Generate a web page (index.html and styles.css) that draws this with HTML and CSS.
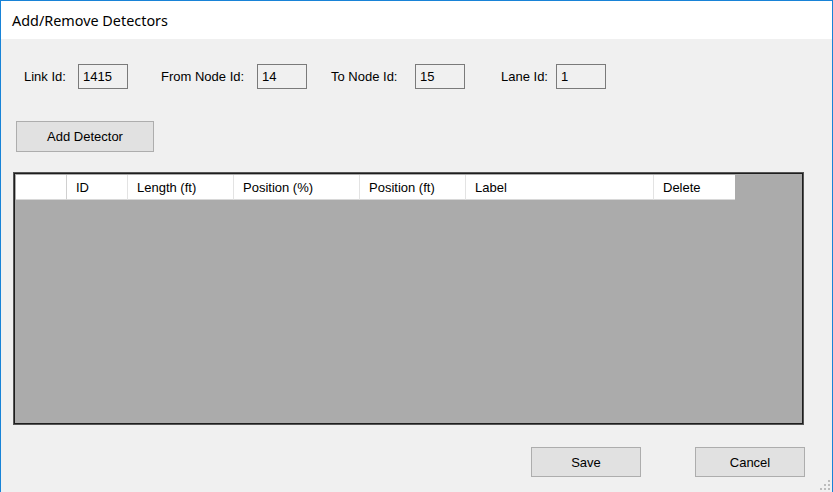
FILE: index.html
```html
<!DOCTYPE html>
<html>
<head>
<meta charset="utf-8">
<link rel="stylesheet" href="styles.css">
</head>
<body>
<div class="window">
  <div class="titlebar">Add/Remove Detectors</div>
  <div class="content">
    <div class="fields">
      <div class="field f-link"><span class="lbl w-link">Link Id:</span><span class="box">1415</span></div>
      <div class="field f-from"><span class="lbl w-from">From Node Id:</span><span class="box">14</span></div>
      <div class="field f-to"><span class="lbl w-to">To Node Id:</span><span class="box">15</span></div>
      <div class="field f-lane"><span class="lbl w-lane">Lane Id:</span><span class="box">1</span></div>
    </div>
    <button class="btn btn-add">Add Detector</button>
    <div class="grid">
      <div class="grid-head">
        <div class="col c-row"></div>
        <div class="col c-id">ID</div>
        <div class="col c-len">Length (ft)</div>
        <div class="col c-pp">Position (%)</div>
        <div class="col c-pf">Position (ft)</div>
        <div class="col c-lab">Label</div>
        <div class="col c-del">Delete</div>
      </div>
    </div>
    <div class="actions">
      <button class="btn btn-save">Save</button>
      <button class="btn btn-cancel">Cancel</button>
    </div>
    <svg class="grip" width="12" height="12" viewBox="0 0 12 12">
      <rect x="9" y="1" width="2" height="2" fill="#bcbcbc"/>
      <rect x="5" y="5" width="2" height="2" fill="#bcbcbc"/>
      <rect x="9" y="5" width="2" height="2" fill="#bcbcbc"/>
      <rect x="1" y="9" width="2" height="2" fill="#bcbcbc"/>
      <rect x="5" y="9" width="2" height="2" fill="#bcbcbc"/>
      <rect x="9" y="9" width="2" height="2" fill="#bcbcbc"/>
    </svg>
  </div>
</div>
</body>
</html>
```
FILE: styles.css
```css
* { box-sizing: border-box; }
html, body { margin: 0; padding: 0; }
body {
  width: 833px;
  height: 492px;
  overflow: hidden;
  background: #f0f0f0;
  font-family: "Liberation Sans", Arial, sans-serif;
  font-size: 13px;
  color: #000;
}
.window {
  width: 833px;
  height: 492px;
  border-top: 1px solid #1883d7;
  border-left: 1px solid #1883d7;
  border-right: 1px solid #1883d7;
  display: flex;
  flex-direction: column;
}
.titlebar {
  height: 38px;
  background: #fff;
  font-family: "Noto Sans", "Open Sans", sans-serif;
  font-size: 14.4px;
  color: #000;
  padding-left: 11px;
  display: flex;
  align-items: center;
}
.content {
  position: relative;
  flex: 1;
  background: #f0f0f0;
  display: flex;
  flex-direction: column;
  align-items: flex-start;
  padding-top: 25px;
}
.fields {
  display: flex;
  align-items: center;
  height: 25px;
}
.field { display: flex; align-items: center; }
.f-link { margin-left: 23px; }
.f-from { margin-left: 33px; }
.f-to { margin-left: 24px; }
.f-lane { margin-left: 36px; }
.lbl { white-space: nowrap; }
.w-link { width: 54px; }
.w-from { width: 96px; }
.w-to { width: 84px; }
.w-lane { width: 55px; }
.box {
  width: 50px;
  height: 25px;
  border: 1px solid #7a7a7a;
  background: #f0f0f0;
  padding-left: 4px;
  display: flex;
  align-items: center;
}
.btn {
  font-family: "Liberation Sans", Arial, sans-serif;
  font-size: 13px;
  color: #000;
  background: #e1e1e1;
  border: 1px solid #adadad;
  padding: 0;
  margin: 0;
}
.btn-add {
  margin-top: 32px;
  margin-left: 15px;
  width: 138px;
  height: 31px;
}
.grid {
  margin-top: 20px;
  margin-left: 12px;
  width: 791px;
  height: 253px;
  background: #ababab;
  border: 1px solid #555;
  box-shadow: inset 0 0 0 1px #1e1e1e;
  padding: 2px;
}
.grid-head {
  display: flex;
  height: 25px;
  background: #ababab;
}
.col {
  height: 25px;
  background: #fff;
  border-right: 1px solid #e3e3e3;
  border-bottom: 1px solid #d8d8d8;
  padding-left: 9px;
  display: flex;
  align-items: center;
  white-space: nowrap;
}
.c-row { width: 51px; border-right-color: #d0d0d0; }
.c-id { width: 61px; }
.c-len { width: 106px; }
.c-pp { width: 126px; }
.c-pf { width: 106px; }
.c-lab { width: 188px; }
.c-del { width: 81px; border-right: none; }
.actions {
  display: flex;
  margin-top: 22px;
  margin-left: 530px;
  gap: 54px;
}
.btn-save, .btn-cancel {
  width: 110px;
  height: 30px;
}
.grip {
  position: absolute;
  right: 1px;
  bottom: 1px;
}
```
